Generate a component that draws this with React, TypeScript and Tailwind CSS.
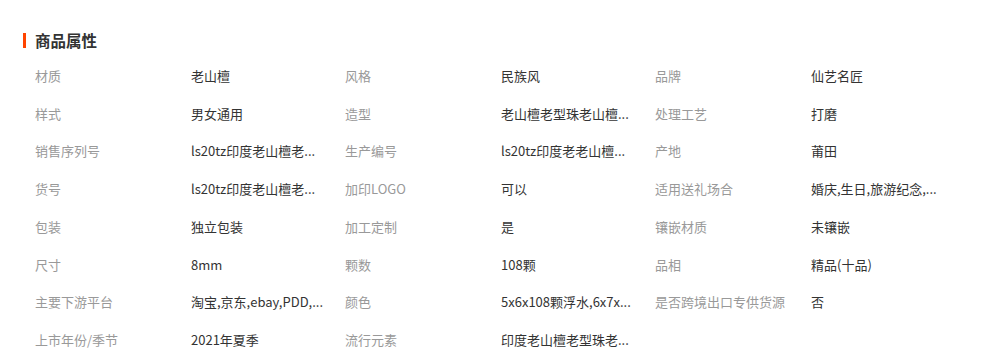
const attrs: [string, string][] = [
  ["材质", "老山檀"],
  ["风格", "民族风"],
  ["品牌", "仙艺名匠"],
  ["样式", "男女通用"],
  ["造型", "老山檀老型珠老山檀..."],
  ["处理工艺", "打磨"],
  ["销售序列号", "ls20tz印度老山檀老..."],
  ["生产编号", "ls20tz印度老老山檀..."],
  ["产地", "莆田"],
  ["货号", "ls20tz印度老山檀老..."],
  ["加印LOGO", "可以"],
  ["适用送礼场合", "婚庆,生日,旅游纪念,..."],
  ["包装", "独立包装"],
  ["加工定制", "是"],
  ["镶嵌材质", "未镶嵌"],
  ["尺寸", "8mm"],
  ["颗数", "108颗"],
  ["品相", "精品(十品)"],
  ["主要下游平台", "淘宝,京东,ebay,PDD,..."],
  ["颜色", "5x6x108颗浮水,6x7x..."],
  ["是否跨境出口专供货源", "否"],
  ["上市年份/季节", "2021年夏季"],
  ["流行元素", "印度老山檀老型珠老..."],
];

export default function App() {
  return (
    <div className="w-[986px] h-[364px] bg-white px-[23px] pt-[33px] font-['Noto_Sans_CJK_SC','Noto_Sans',sans-serif] overflow-hidden">
      {/* Title */}
      <div className="flex items-center h-[15px]">
        <span className="w-[3px] h-[15px] bg-[#ff4400]" />
        <h2 className="ml-[9px] text-[15.5px] leading-[15px] font-bold text-[#333]">商品属性</h2>
      </div>

      {/* Attribute grid */}
      <div className="mt-[9px] pl-[12px] grid grid-cols-[310px_310px_310px]">
        {attrs.map(([label, value], i) => (
          <div key={i} className="flex items-center h-[37.7px] text-[13px]">
            <span className="w-[156px] shrink-0 text-[#999] whitespace-nowrap">{label}</span>
            <span className="whitespace-nowrap text-[#333]">{value}</span>
          </div>
        ))}
      </div>
    </div>
  );
}
